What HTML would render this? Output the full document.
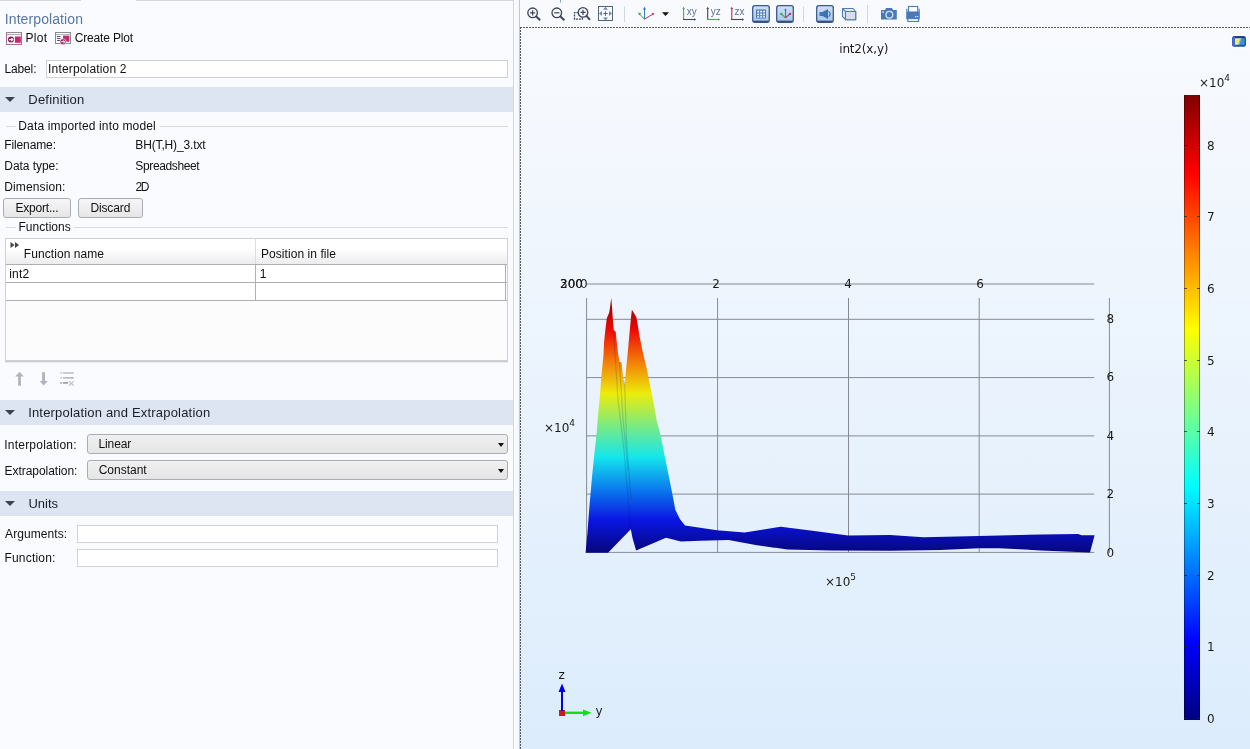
<!DOCTYPE html>
<html lang="en">
<head>
<meta charset="utf-8">
<title>Interpolation</title>
<style>
html,body{margin:0;padding:0;}
body{width:1250px;height:749px;overflow:hidden;position:relative;background:#fafbfe;
  font-family:"Liberation Sans",sans-serif;font-size:12px;color:#111;}
.abs{position:absolute;}
.t{position:absolute;white-space:nowrap;line-height:14px;height:14px;transform-origin:0 50%;}
.dj{font-family:"DejaVu Sans","Liberation Sans",sans-serif;font-size:12px;color:#1a1a1a;}
#left{will-change:transform;position:absolute;left:0;top:0;width:513px;height:749px;background:#fafbfe;overflow:hidden;}
.band{position:absolute;left:0;width:513px;height:25px;background:#dde5f2;}
.band .tri{position:absolute;left:5px;top:10px;width:0;height:0;border-left:5px solid transparent;border-right:5px solid transparent;border-top:5.500px solid #3b4250;}
.band .t{left:29px;top:6px;font-size:13px;color:#1b1f28;}
.hl{position:absolute;height:1px;background:#d5dae2;}
.inp{position:absolute;background:#fff;border:1px solid #d0d2d7;box-sizing:border-box;}
.btn{position:absolute;box-sizing:border-box;border:1px solid #a9adb3;border-radius:3px;background:linear-gradient(#f6f6f6,#e6e6e6);}
.sel{position:absolute;box-sizing:border-box;border:1px solid #a9adb3;border-radius:3px;background:linear-gradient(#f0f0f0,#e5e5e5);}
.sel .ar{position:absolute;right:3.500px;top:7.500px;width:0;height:0;border-left:3.800px solid transparent;border-right:3.800px solid transparent;border-top:4.500px solid #111;}
</style>
</head>
<body>
<div id="left">
  <!-- top edge -->
  <div class="abs" style="left:0;top:0;width:81px;height:1px;background:#d5d7dc"></div>
  <div class="abs" style="left:136px;top:0;width:377px;height:1px;background:#d5d7dc"></div>

  <div class="t" id="ttl" style="left:4.78px;top:12px;font-size:14px;color:#5877a3;letter-spacing:0.095px;">Interpolation</div>

  <!-- Plot icon -->
  <svg class="abs" style="left:0;top:26px" width="80" height="24" viewBox="0 26 80 24">
    <rect x="6.500" y="32.500" width="15" height="12" fill="#fdf7fa" stroke="#a8708c" stroke-width="1"/>
    <path d="M6.500 32.500H21.500" stroke="#8d8d94" stroke-width="1"/>
    <path d="M7 34.500H21" stroke="#b9a9b3" stroke-width="1"/>
    <rect x="15" y="36.500" width="5.800" height="6.300" fill="#c12a6e"/>
    <circle cx="11" cy="39.600" r="3" fill="#8b1d54"/>
    <path d="M9.200 39.600h3.200M11.300 38.100l1.600 1.500-1.600 1.500" stroke="#fff" stroke-width="1.100" fill="none"/>
    <!-- Create Plot icon -->
    <rect x="55.500" y="32.500" width="15" height="11" fill="#fdfbfc" stroke="#858a93" stroke-width="1"/>
    <path d="M56 34.500H70" stroke="#b4b7bd" stroke-width="1"/>
    <path d="M57 36.500h3.400M57 38.500h3.400M57 40.500h3" stroke="#50555f" stroke-width="1"/>
    <rect x="63" y="35.600" width="6.400" height="6.100" fill="#c12a6e"/>
    <circle cx="63" cy="41.700" r="3" fill="#a01f62" stroke="#fdf7fa" stroke-width="0.600"/>
    <path d="M61.300 41.700h3M63.400 40.300l1.500 1.400-1.500 1.400" stroke="#fff" stroke-width="1" fill="none"/>
  </svg>
  <div class="t" id="tplot" style="left:25.41px;top:31px;letter-spacing:0.336px;">Plot</div>
  <div class="t" id="tcplot" style="left:74.84px;top:31px;letter-spacing:-0.184px;">Create Plot</div>

  <div class="t" id="tlabel" style="left:4.41px;top:62px;letter-spacing:-0.126px;">Label:</div>
  <div class="inp" style="left:46px;top:60px;width:462px;height:18px;"></div>
  <div class="t" id="tlabelv" style="left:48.06px;top:62px;letter-spacing:0.169px;">Interpolation 2</div>

  <!-- Definition -->
  <div class="band" style="top:87px"><div class="tri"></div><div class="t" id="b1" style="letter-spacing:0.195px;margin-left:-0.7px;">Definition</div></div>

  <div class="hl" style="left:6px;top:126px;width:10px"></div>
  <div class="hl" style="left:160px;top:126px;width:348px"></div>
  <div class="t" id="tdata" style="left:18.27px;top:119px;letter-spacing:0.147px;">Data imported into model</div>

  <div class="t" id="tfn" style="left:4.27px;top:138px;letter-spacing:-0.123px;">Filename:</div>
  <div class="t" id="tfnv" style="left:135.27px;top:138px;letter-spacing:-0.138px;">BH(T,H)_3.txt</div>
  <div class="t" id="tdt" style="left:4.27px;top:159px;letter-spacing:-0.054px;">Data type:</div>
  <div class="t" id="tdtv" style="left:135.35px;top:159px;letter-spacing:-0.373px;">Spreadsheet</div>
  <div class="t" id="tdim" style="left:4.27px;top:180px;letter-spacing:0.124px;">Dimension:</div>
  <div class="t" id="tdimv" style="left:135.41px;top:180px;letter-spacing:-1.339px;">2D</div>

  <div class="btn" style="left:3px;top:198px;width:68px;height:20px;"></div>
  <div class="t" id="texp" style="left:15.42px;top:201px;letter-spacing:-0.193px;">Export...</div>
  <div class="btn" style="left:78px;top:198px;width:65px;height:20px;"></div>
  <div class="t" id="tdis" style="left:90.41px;top:201px;letter-spacing:-0.127px;">Discard</div>

  <div class="hl" style="left:6px;top:227px;width:10px"></div>
  <div class="hl" style="left:74px;top:227px;width:434px"></div>
  <div class="t" id="tfuncs" style="left:18.41px;top:220px;letter-spacing:0.045px;">Functions</div>

  <!-- table -->
  <div class="abs" style="left:5px;top:238px;width:503px;height:124px;box-sizing:border-box;border:1px solid #cfd1d6;border-bottom:2px solid #cdced3;background:#fcfcfd;"></div>
  <div class="abs" style="left:6px;top:239px;width:501px;height:25px;background:linear-gradient(#ffffff 40%,#ececee);"></div>
  <div class="abs" style="left:255px;top:239px;width:1px;height:25px;background:#dcdde0"></div>
  <div class="abs" style="left:5px;top:362px;width:503px;height:1px;background:#e9eaee"></div>
  <div class="abs" style="left:6px;top:264px;width:501px;height:1px;background:#adafb4"></div>
  <div class="abs" style="left:6px;top:265px;width:499px;height:17px;background:#fff"></div>
  <div class="abs" style="left:6px;top:282px;width:501px;height:1px;background:#adafb4"></div>
  <div class="abs" style="left:6px;top:283px;width:499px;height:17px;background:#fff"></div>
  <div class="abs" style="left:6px;top:300px;width:501px;height:1px;background:#adafb4"></div>
  <div class="abs" style="left:255px;top:264px;width:1px;height:37px;background:#adafb4"></div>
  <div class="abs" style="left:505px;top:264px;width:1px;height:37px;background:#adafb4"></div>
  <svg class="abs" style="left:10px;top:241px" width="10" height="8" viewBox="0 0 10 8"><path d="M0.5 1l4 3-4 3zM5 1l4 3-4 3z" fill="#444"/></svg>
  <div class="t" id="th1" style="left:23.79px;top:247px;letter-spacing:0.072px;">Function name</div>
  <div class="t" id="th2" style="left:260.92px;top:247px;letter-spacing:0.068px;">Position in file</div>
  <div class="t" id="tc1" style="left:9.16px;top:267px;letter-spacing:0.214px;">int2</div>
  <div class="t" id="tc2" style="left:259.87px;top:267px;letter-spacing:-4.407px;">1</div>

  <!-- small icons -->
  <svg class="abs" style="left:0;top:365px" width="90" height="26" viewBox="0 365 90 26">
    <path d="M18.100 385.800V376.500H15.200L19.500 371.800 23.900 376.500H20.900V385.800z" fill="#b1b4bb"/>
    <path d="M42.100 372.200V381H39.600L43.600 385.600 47.800 381H45V372.200z" fill="#b1b4bb"/>
    <g stroke="#babdc4" fill="none">
      <path d="M60.400 373h1.400M62.900 373H73.800M60.400 377.900h1.400M62.900 377.900H73.800" stroke-width="1.700"/>
      <path d="M60.400 382.800h1.400M62.900 382.800H68" stroke-width="1.700" stroke="#9fa2aa"/>
      <path d="M68.800 381.200L73.800 385.600M73.800 381.200L68.800 385.600" stroke-width="1.100"/>
    </g>
  </svg>

  <!-- Interpolation and Extrapolation -->
  <div class="band" style="top:400px"><div class="tri"></div><div class="t" id="b2" style="letter-spacing:0.189px;margin-left:-0.89px;">Interpolation and Extrapolation</div></div>
  <div class="t" id="tint" style="left:4.25px;top:438px;letter-spacing:0.222px;">Interpolation:</div>
  <div class="sel" style="left:87px;top:434px;width:421px;height:20px;"><div class="ar"></div></div>
  <div class="t" id="tlin" style="left:98.48px;top:437px;letter-spacing:-0.095px;">Linear</div>
  <div class="t" id="text" style="left:4.47px;top:464px;letter-spacing:-0.037px;">Extrapolation:</div>
  <div class="sel" style="left:87px;top:460px;width:421px;height:20px;"><div class="ar"></div></div>
  <div class="t" id="tcon" style="left:98.69px;top:463px;letter-spacing:-0.011px;">Constant</div>

  <!-- Units -->
  <div class="band" style="top:491px"><div class="tri"></div><div class="t" id="b3" style="letter-spacing:0.005px;margin-left:-0.55px;">Units</div></div>
  <div class="t" id="targ" style="left:5.05px;top:527px;letter-spacing:0.082px;">Arguments:</div>
  <div class="inp" style="left:77px;top:525px;width:421px;height:18px;"></div>
  <div class="t" id="tfun" style="left:4.47px;top:551px;letter-spacing:0.2px;">Function:</div>
  <div class="inp" style="left:77px;top:549px;width:421px;height:18px;"></div>
</div>

<!-- divider -->
<div class="abs" style="left:513px;top:0;width:1px;height:749px;background:#d8d4d2"></div>
<div class="abs" style="left:514px;top:0;width:6px;height:749px;background:linear-gradient(90deg,#fdfeff,#eef5fc)"></div>
<div class="abs" style="left:519px;top:0;width:1px;height:749px;background:#b9cbe2"></div>

<div id="right" class="abs" style="will-change:transform;left:520px;top:0;width:730px;height:749px;background:#f8fafe;overflow:hidden;">
<!--RIGHT-START-->
<svg class="abs" style="left:0;top:0" width="730" height="749" viewBox="520 0 730 749" font-family="'DejaVu Sans','Liberation Sans',sans-serif" font-size="12" fill="#1a1a1a">
  <defs>
    <linearGradient id="bg" x1="0" y1="28" x2="0" y2="749" gradientUnits="userSpaceOnUse">
      <stop offset="0" stop-color="#f8fafe"/><stop offset="1" stop-color="#dcecfc"/>
    </linearGradient>
    <linearGradient id="jet" x1="0" y1="552.5" x2="0" y2="298" gradientUnits="userSpaceOnUse">
      <stop offset="0" stop-color="#07077c"/><stop offset="0.125" stop-color="#0a14e2"/>
      <stop offset="0.25" stop-color="#0a7cee"/><stop offset="0.375" stop-color="#14e6ec"/>
      <stop offset="0.5" stop-color="#7cea80"/><stop offset="0.625" stop-color="#ecec0a"/>
      <stop offset="0.75" stop-color="#f47c08"/><stop offset="0.875" stop-color="#ee0808"/>
      <stop offset="1" stop-color="#8a0000"/>
    </linearGradient>
    <linearGradient id="jetbar" x1="0" y1="720" x2="0" y2="95" gradientUnits="userSpaceOnUse">
      <stop offset="0" stop-color="#000080"/><stop offset="0.125" stop-color="#0000ff"/>
      <stop offset="0.375" stop-color="#00ffff"/><stop offset="0.5" stop-color="#80ff80"/>
      <stop offset="0.625" stop-color="#ffff00"/><stop offset="0.875" stop-color="#ff0000"/>
      <stop offset="1" stop-color="#800000"/>
    </linearGradient>
    <linearGradient id="tb" x1="0" y1="0" x2="0" y2="1">
      <stop offset="0" stop-color="#cfe0f7"/><stop offset="1" stop-color="#a9c6ee"/>
    </linearGradient>
  </defs>
  <rect x="520" y="28" width="730" height="721" fill="url(#bg)"/>
  <!-- dotted frame -->
  <path d="M520 27.5H1250" stroke="#55585f" stroke-width="1" stroke-dasharray="2 1"/>
  <rect x="560" y="0" width="1" height="2.500" fill="#8aa0c8"/>
  <path d="M520.5 27V749" stroke="#55585f" stroke-width="1" stroke-dasharray="2 1"/>

  <g id="toolbar">
    <!-- zoom in -->
    <g fill="none" stroke="#3d4859" stroke-linecap="butt">
      <circle cx="532.600" cy="12.800" r="4.800" stroke-width="1.300"/>
      <path d="M536 16.200L540.200 20.200" stroke-width="2"/>
      <path d="M530 12.800h5.200M532.600 10.200v5.200" stroke-width="1.200"/>
      <!-- zoom out -->
      <circle cx="556.800" cy="12.800" r="4.800" stroke-width="1.300"/>
      <path d="M560.200 16.200L564.400 20.200" stroke-width="2"/>
      <path d="M554.200 12.800h5.200" stroke-width="1.200"/>
      <!-- zoom box -->
      <circle cx="583" cy="12.400" r="4.800" stroke-width="1.300"/>
      <path d="M586.400 15.800L590 19.800" stroke-width="2"/>
      <path d="M580.400 12.400h5.200M583 9.800v5.200" stroke-width="1.200"/>
      <path d="M578.500 12.600H574.500V19.200H582.400V17.200" stroke-width="1.300" stroke-dasharray="2 1"/>
      <!-- zoom extents -->
      <rect x="598.500" y="6.500" width="14" height="14" stroke="#566275" stroke-width="1"/>
      <path d="M603.300 13.600h4.400M605.500 11.400v4.400" stroke-width="1" stroke="#566275"/>
    </g>
    <path d="M603 9.800L605.500 6.800 608 9.800zM603 17.400L605.500 20.400 608 17.400zM602 11.100L599 13.600 602 16.100zM609 11.100L612 13.600 609 16.100z" fill="#6f8cb0"/>
    <!-- separators -->
    <path d="M624.500 6.500V22M803.500 6.500V22M867.500 5V23" stroke="#d3d6dc" stroke-width="1"/>
    <!-- 3d axes -->
    <g fill="none" stroke-width="1">
      <path d="M644.500 19.200V8.500" stroke="#2f80ad"/>
      <path d="M644.500 19.200L639.300 13.800" stroke="#4fa04f"/>
      <path d="M644.500 19.200L653 14" stroke="#c4325f"/>
    </g>
    <path d="M642.900 9.600L644.500 6.800 646.100 9.600z" fill="#2f80ad"/>
    <path d="M638 12.400L641.200 13.300 639.200 15.400z" fill="#4fa04f"/>
    <path d="M654.600 13L651.500 13.200 652.900 15.600z" fill="#c4325f"/>
    <path d="M662 12.200H669L665.500 15.900z" fill="#111"/>
    <!-- xy -->
    <g fill="none" stroke-width="1.100">
      <path d="M683.600 19.500V8" stroke="#5c9c5c"/><path d="M683 19.500H694.500" stroke="#3d4859"/>
      <path d="M707.700 19.500V8" stroke="#3d4859"/><path d="M707 19.500H718.500" stroke="#5c9c5c"/>
      <path d="M731.800 19.500V8" stroke="#a83257"/><path d="M731 19.500H742.500" stroke="#3d4859"/>
    </g>
    <path d="M682.300 9L683.600 6.800 684.900 9z" fill="#5c9c5c"/><path d="M694 18.200L696.200 19.500 694 20.800z" fill="#3d4859"/>
    <path d="M706.400 9L707.700 6.800 709 9z" fill="#3d4859"/><path d="M718 18.200L720.200 19.500 718 20.800z" fill="#5c9c5c"/>
    <path d="M730.500 9L731.800 6.800 733.100 9z" fill="#a83257"/><path d="M742 18.200L744.200 19.500 742 20.800z" fill="#3d4859"/>
    <g font-family="'Liberation Sans',sans-serif" font-size="10" fill="#5d7293">
      <text x="686.800" y="15">xy</text>
      <text x="710.800" y="15">yz</text>
      <text x="734.600" y="15">zx</text>
    </g>
    <!-- grid toggle (active) -->
    <rect x="752.700" y="5.700" width="16.600" height="16.600" rx="2.200" fill="url(#tb)" stroke="#3b5a8c" stroke-width="1.300"/>
    <path d="M753.500 21.300H768.500" stroke="#2f4a78" stroke-width="1.300"/>
    <rect x="756" y="9.500" width="10" height="9" fill="#4377bb"/>
    <g fill="#f4f9ff"><rect x="757.200" y="10.700" width="2" height="1.800"/><rect x="760.200" y="10.700" width="2" height="1.800"/><rect x="763.200" y="10.700" width="1.800" height="1.800"/>
    <rect x="757.200" y="13.500" width="2" height="1.800"/><rect x="760.200" y="13.500" width="2" height="1.800"/><rect x="763.200" y="13.500" width="1.800" height="1.800"/>
    <rect x="757.200" y="16.200" width="2" height="1.500"/><rect x="760.200" y="16.200" width="2" height="1.500"/><rect x="763.200" y="16.200" width="1.800" height="1.500"/></g>
    <!-- axes toggle (active) -->
    <rect x="776.700" y="5.700" width="16.600" height="16.600" rx="2.200" fill="url(#tb)" stroke="#3b5a8c" stroke-width="1.300"/>
    <path d="M777.500 21.300H792.500" stroke="#2f4a78" stroke-width="1.300"/>
    <g fill="none" stroke-width="1.100">
      <path d="M785.500 17.800V9.500" stroke="#2f80ad"/>
      <path d="M785.500 17.800L781.400 14" stroke="#4fa04f"/>
      <path d="M785.500 17.800L789.800 14" stroke="#c4325f"/>
    </g>
    <path d="M784.200 10.200L785.500 8.200 786.800 10.200z" fill="#2f80ad"/>
    <circle cx="781.200" cy="13.900" r="1.200" fill="#4fa04f"/><circle cx="790" cy="13.900" r="1.200" fill="#c4325f"/>
    <!-- speaker (active) -->
    <rect x="816.700" y="5.700" width="16.600" height="16.600" rx="2.200" fill="url(#tb)" stroke="#3b5a8c" stroke-width="1.300"/>
    <path d="M817.500 21.300H832.500" stroke="#2f4a78" stroke-width="1.300"/>
    <path d="M819.500 12h3L828 9V19L822.500 16h-3z" fill="#3f72b3"/>
    <path d="M828.500 11.200A3.200 3.200 0 0 1 828.500 16.800" fill="none" stroke="#3f72b3" stroke-width="1.200"/>
    <!-- cube -->
    <g fill="#e4eefb" stroke="#4d7cb5" stroke-width="1.100" stroke-linejoin="round">
      <path d="M842.500 8.500H853L855.700 11.500V19.700H845.500L842.500 16.500z"/>
      <rect x="845.500" y="11.500" width="10.200" height="8.200" fill="#d9dde4"/>
      <path d="M842.500 8.500L845.500 11.500" fill="none"/>
    </g>
    <!-- camera -->
    <path d="M881 10H885L886 8H892L893 10H896.800V19.600H881z" fill="#4a79b6"/>
    <circle cx="889.400" cy="14.800" r="3.400" fill="#4a79b6" stroke="#cfe3fc" stroke-width="1.300"/>
    <rect x="882.300" y="11.300" width="1.500" height="1.500" fill="#e8f1fd"/>
    <!-- printer -->
    <rect x="908.500" y="6.500" width="9.200" height="6" fill="#fbfdff" stroke="#4a79b6" stroke-width="1.100"/>
    <rect x="906.200" y="11.600" width="13.600" height="7.800" rx="0.800" fill="#4a79b6"/>
    <path d="M906.800 8.800v3M919.200 8.800v3" stroke="#4a79b6" stroke-width="1.100"/>
    <rect x="907.800" y="18.600" width="10.800" height="2.800" fill="#fbfdff" stroke="#4a79b6" stroke-width="1.100"/>
    <rect x="915" y="16" width="1.200" height="1.200" fill="#dbe9fb"/><rect x="916.900" y="16" width="1.200" height="1.200" fill="#dbe9fb"/>
  </g>


  <text x="863.800" y="53.100" text-anchor="middle" letter-spacing="-0.180">int2(x,y)</text>

  <!-- grid -->
  <g stroke="#868b93" stroke-width="1" fill="none">
    <path d="M587 284H1094.300"/>
    <path d="M586.600 298V553M717.600 298V553M848.500 298V553M979.200 298V553"/>
    <path d="M586 319.300H1094.300M586 377.600H1094.300M586 435.900H1094.300M586 494.100H1094.300M586 552.400H1094.300"/>
    <path d="M1109.400 298V553"/>
  </g>
  <!-- surface -->
  <path id="surf" fill="url(#jet)" d="M585.6 552.7 L587.5 532.1 L589.3 507.9 L592.1 476 L595 448 L597 429.5 L598 415 L600 395 L601.5 375 L603.5 355 L604 342.5 L605.4 329.4 L606.8 318.2 L609.2 312.6 L610.1 307 L611.3 298.1 L612 307 L612.9 320 L613.8 330.3 L615.7 331.7 L616.6 340.6 L618 352.7 L619.5 362 L621.5 362.5 L622.5 372 L624.5 385.5 L625.2 381 L626 370 L627.5 355 L628.3 346.2 L629.7 331.3 L630.9 318.2 L631.9 309.8 L633.9 313 L636.4 317.2 L637.7 324.7 L639.5 335.9 L642.3 350 L643.5 355 L647 370 L650 385 L654 405 L656.6 420 L659 429.5 L661.3 438.7 L665 457.4 L668.8 476 L672.5 494.8 L675.3 509.7 L680 519.3 L685 525.5 L717 530.2 L744.7 532.4 L780.8 526.8 L814.4 531 L848 535.6 L890 534.9 L923.6 537.3 L979 536.1 L1041.2 534.4 L1078.2 533.9 L1081.5 535.2 L1094.6 535.2 L1090 552.6 L1041 550.4 L999 548.3 L979 548.3 L940.4 550 L890 550.7 L831.2 550.4 L787.5 549.5 L755.6 545 L728.7 540 L700 540.8 L681 541.5 L666 537.8 L636.1 550.5 L632.5 538 L630.8 529.3 L608 552.7 Z"/>

  <g fill="none" stroke="#001060" stroke-opacity="0.16" stroke-width="1.2">
    <path d="M613.600 331L618 400 624 450 630.500 528"/>
    <path d="M619.500 362L623 420 628 470"/>
    <path d="M624.500 381L626.500 440 631 500"/>
  </g>
  <!-- axis labels -->
  <text x="560" y="287.500">300</text>
  <text x="560" y="287.500">200</text>
  <text x="580" y="287.500">0</text>
  <text x="716" y="287.500" text-anchor="middle">2</text>
  <text x="848" y="287.500" text-anchor="middle">4</text>
  <text x="980" y="287.500" text-anchor="middle">6</text>
  <text x="1106.600" y="322.500">8</text>
  <text x="1106.600" y="381">6</text>
  <text x="1106.600" y="439.500">4</text>
  <text x="1106.600" y="498.200">2</text>
  <text x="1106.600" y="556.500">0</text>
  <text x="544" y="432">×10<tspan dy="-6" font-size="9">4</tspan></text>
  <text x="825" y="586">×10<tspan dy="-6" font-size="9">5</tspan></text>

  <!-- colorbar -->
  <rect x="1184" y="95" width="16" height="625" fill="url(#jetbar)"/>
  <rect x="1184" y="95" width="1" height="625" fill="#000" opacity="0.35"/>
  <rect x="1199" y="95" width="1" height="625" fill="#000" opacity="0.35"/>
  <g stroke="#222" stroke-width="1" opacity="0.7" shape-rendering="crispEdges">
    <path d="M1184 718.500h3M1197 718.500h3M1184 646.500h3M1197 646.500h3M1184 575.500h3M1197 575.500h3M1184 503.500h3M1197 503.500h3M1184 431.500h3M1197 431.500h3M1184 360.500h3M1197 360.500h3M1184 288.500h3M1197 288.500h3M1184 216.500h3M1197 216.500h3M1184 145.500h3M1197 145.500h3"/>
  </g>
  <text x="1207" y="722.5">0</text>
  <text x="1207" y="651.4">1</text>
  <text x="1207" y="579.6">2</text>
  <text x="1207" y="507.6">3</text>
  <text x="1207" y="436.4">4</text>
  <text x="1207" y="364.5">5</text>
  <text x="1207" y="292.6">6</text>
  <text x="1207" y="221.4">7</text>
  <text x="1207" y="149.7">8</text>
  <text x="1199" y="87">×10<tspan dy="-6" font-size="9">4</tspan></text>

  <!-- axis triad -->
  <rect x="559" y="710" width="6" height="6" fill="#d01818"/>
  <path d="M562 711V691" stroke="#0000e0" stroke-width="2"/>
  <path d="M558.500 692L562 683.500 565.500 692z" fill="#0000e0"/>
  <path d="M565 712.800H584" stroke="#10e010" stroke-width="2.400"/>
  <path d="M583 709.500L591.500 712.800 583 716.200z" fill="#10e010"/>
  <text x="558.500" y="679">z</text>
  <text x="595.500" y="715">y</text>

  <!-- corner icon -->
  <g>
    <rect x="1230.300" y="34.300" width="17.400" height="14.400" rx="4" fill="#ffffff" opacity="0.850"/>
    <rect x="1232" y="36" width="14" height="10.800" rx="2.600" fill="#2450ad"/>
    <path d="M1233 36.600h12v2.200h-12z" fill="#1b2f86" opacity="0.700"/>
    <path d="M1232.300 38v7l1 1.300h1.500V36.600h-1.300z" fill="#4f6fc9"/>
    <path d="M1235 38.300H1241L1238.700 44.800H1235z" fill="#efee9c"/>
    <path d="M1236.500 39.500h2.500l-1 3.500h-1.500z" fill="#f7e24a" opacity="0.800"/>
    <path d="M1241 38.300H1244.700V44.800H1238.700z" fill="#3c8ce6"/>
    <path d="M1239.800 38.300h1.800l-2.300 6.500h-1.200z" fill="#8fd694" opacity="0.800"/>
  </g>
</svg>
<!--RIGHT-END-->
</div>
</body>
</html>
